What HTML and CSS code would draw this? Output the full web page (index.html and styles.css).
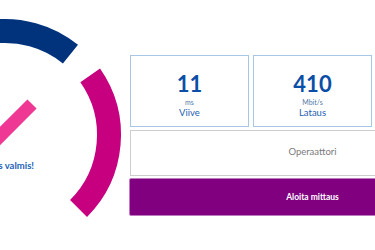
FILE: index.html
```html
<!DOCTYPE html>
<html lang="fi">
<head>
    <meta charset="UTF-8">
    <meta name="viewport" content="width=device-width, initial-scale=1.0">
    <title>Nopeustesti</title>
    <link rel="stylesheet" href="styles.css">
</head>
<body>
    <div class="page">
        <div class="gauge">
            <svg width="130" height="250" viewBox="0 0 130 250">
                <!-- gauge center is at (5,135), radius 104 -->
                <path d="M -85.07 83 A 104 104 0 0 1 70.45 54.18" class="arc-navy"/>
                <path d="M 90.19 75.35 A 104 104 0 0 1 78.54 208.54" class="arc-magenta"/>
                <line x1="-12" y1="148" x2="32" y2="104" class="needle"/>
                <text x="34" y="169" text-anchor="end" class="status">Mittaus valmis!</text>
            </svg>
        </div>

        <div class="panel">
            <div class="results">
                <div class="card">
                    <div class="value">11</div>
                    <div class="unit">ms</div>
                    <div class="label">Viive</div>
                </div>
                <div class="card">
                    <div class="value">410</div>
                    <div class="unit">Mbit/s</div>
                    <div class="label">Lataus</div>
                </div>
            </div>

            <div class="operator">Operaattori</div>

            <button class="start" type="button">Aloita mittaus</button>
        </div>
    </div>
</body>
</html>
```

FILE: styles.css
```css
html, body {
    margin: 0;
    overflow: hidden;
}
body {
    font-family: Lato, "Open Sans", sans-serif;
    background-color: #fff;
}
.page {
    display: flex;
    width: 495px;
}
.gauge {
    width: 130px;
    flex-shrink: 0;
}
.gauge svg {
    display: block;
}
.arc-navy {
    fill: none;
    stroke: #01337d;
    stroke-width: 24;
}
.arc-magenta {
    fill: none;
    stroke: #c6007f;
    stroke-width: 24;
}
.needle {
    stroke: #ef3893;
    stroke-width: 13;
}
.status {
    font-family: Lato, sans-serif;
    font-size: 9.5px;
    font-weight: 700;
    fill: #2563b6;
}
.panel {
    width: 365px;
    flex-shrink: 0;
    padding-top: 55px;
}
.results {
    display: grid;
    grid-template-columns: repeat(3, 119px);
    gap: 4px;
}
.card {
    height: 72px;
    box-sizing: border-box;
    border: 1px solid #a8c6e6;
    padding-top: 17px;
    text-align: center;
}
.value {
    font-size: 22px;
    line-height: 22px;
    font-weight: 700;
    color: #0b4ea6;
}
.unit {
    margin-top: 3px;
    font-size: 7px;
    line-height: 9px;
    color: #5479a8;
}
.label {
    font-size: 9.5px;
    line-height: 11px;
    color: #2461b2;
}
.operator {
    margin-top: 3px;
    height: 46px;
    box-sizing: border-box;
    border: 1px solid #cdcdcd;
    padding-bottom: 3px;
    display: flex;
    align-items: center;
    justify-content: center;
    font-size: 9.5px;
    color: #7a7a7a;
}
.start {
    display: block;
    margin: 2px 0 0 -1px;
    width: 367px;
    height: 38px;
    background-color: #800080;
    border: 1px solid #be7abe;
    border-radius: 2px;
    color: #fff;
    font-family: Lato, sans-serif;
    font-size: 8.5px;
    font-weight: 700;
    padding: 0;
}
```
